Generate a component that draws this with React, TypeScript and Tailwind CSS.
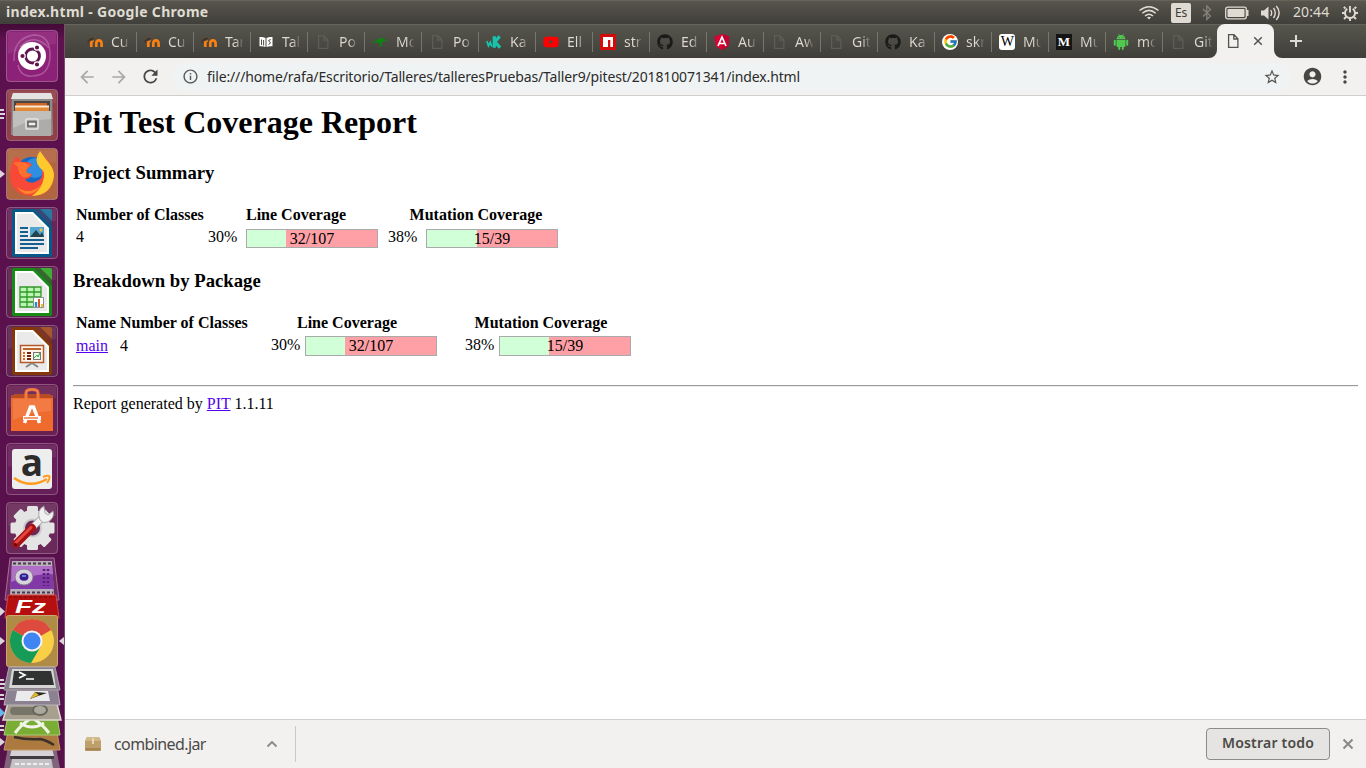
import type { ReactNode } from "react";
import { FaGithub, FaYoutube } from "react-icons/fa";
import { FcGoogle } from "react-icons/fc";
import {
  MdAccountCircle,
  MdArrowBack,
  MdArrowForward,
  MdInfoOutline,
  MdMoreVert,
  MdRefresh,
  MdStarBorder,
} from "react-icons/md";

/* ---------- Favicons ---------- */

function Moodle() {
  return (
    <svg width="16" height="16" viewBox="0 0 16 16">
      <path d="M4.300 13V9Q4.300 6.300 6.800 6.300M9.300 13V9.500Q9.300 6.300 11.900 6.300T14.600 9.500V13" fill="none" stroke="#f98012" strokeWidth="2.700" />
      <path d="M0 6.500L4 3.200L8.500 3.500L6.500 6L2 7.500V11" fill="#383632" stroke="#7b5230" strokeWidth=".6" />
    </svg>
  );
}

function Page({ color = "#5d5c55" }: { color?: string }) {
  return (
    <svg width="16" height="16" viewBox="0 0 16 16" fill="none" stroke={color} strokeWidth="1.300">
      <path d="M3.600 1.700H9L12.900 5.700V14.300H3.600ZM8.800 1.900V6H12.700" />
    </svg>
  );
}

function Book() {
  return (
    <svg width="16" height="16" viewBox="0 0 16 16">
      <path d="M1.500 3Q5 2.500 7.500 4V13Q5 11.800 1.500 12.300ZM14.500 3Q11 2.500 8.500 4V13Q11 11.800 14.500 12.300Z" fill="#fff" />
      <path d="M3.500 5.500V11M5.600 6V11.500M12.800 5.500L10.500 6.500L12.600 9L10.500 10.500" stroke="#4b4a44" fill="none" />
    </svg>
  );
}

function Kangaroo() {
  return (
    <svg width="16" height="16" viewBox="0 0 16 16">
      <path d="M0 8.500L4 6.500L7 4.500L9.500 3.500L11 5L14 5.500L15 6.500L11.500 7.500L9 9L10.500 11L8 13L7 12.500L8.500 11L6.500 9L4.500 8L1 9Z" fill="#0b850f" />
    </svg>
  );
}

function Kahoot() {
  return (
    <svg width="17" height="16" viewBox="0 0 17 16" fill="none" stroke="#16c4ae">
      <path d="M.8 7L2.600 12L4.500 8.500L6.300 13" strokeWidth="1.900" />
      <path d="M8.800 2V14M14.500 1.800L9.500 8L15 14" strokeWidth="3.400" />
    </svg>
  );
}

function Npm() {
  return (
    <svg width="16" height="16" viewBox="0 0 16 16">
      <path d="M0 0H16V16H0Z" fill="#d50a0a" />
      <path d="M3 3H13V13H10.300V6H8V13H3Z" fill="#fff" />
    </svg>
  );
}

function Angular() {
  return (
    <svg width="16" height="16" viewBox="0 0 16 16">
      <path d="M8 0L15.300 2.600L14.200 12.200L8 16L1.800 12.200L.7 2.600Z" fill="#dd0031" />
      <path d="M8 0L15.300 2.600L14.200 12.200L8 16Z" fill="#c3002f" />
      <path d="M4 12L8 3L12 12M5.500 9.500H10.500" fill="none" stroke="#fff" strokeWidth="1.700" />
    </svg>
  );
}

function Android() {
  return (
    <svg width="16" height="16" viewBox="0 0 16 16" fill="#50c850">
      <path d="M3.500 5.300Q3.800 2.300 6 1.500L5.200 .3L5.800 0L6.700 1.200Q8 .9 9.300 1.200L10.200 0L10.800 .3L10 1.500Q12.200 2.300 12.500 5.300Z" />
      <path d="M3.500 6H12.500V12Q12.500 13 11.500 13H10.700V15Q10.700 16 9.700 16T8.800 15V13H7.200V15Q7.200 16 6.300 16T5.300 15V13H4.500Q3.500 13 3.500 12Z" />
      <rect x=".8" y="5.800" width="2" height="6" rx="1" />
      <rect x="13.200" y="5.800" width="2" height="6" rx="1" />
      <path d="M5.500 3.200H6.400V4H5.500ZM9.600 3.200H10.500V4H9.600Z" fill="#4b4a44" />
    </svg>
  );
}

function Letter({ children, dark = false }: { children: string; dark?: boolean }) {
  return (
    <span
      className={
        dark
          ? "flex size-4 items-center justify-center bg-[#151515] font-['Liberation_Serif',serif] text-[13px] leading-4 font-bold text-white"
          : "flex size-4 items-center justify-center rounded-[3px] bg-white font-['Liberation_Serif',serif] text-[14px] leading-4 tracking-tighter text-black"
      }
    >
      {children}
    </span>
  );
}

const tabs: { icon: ReactNode; title: string }[] = [
  { icon: <Moodle />, title: "Cu" },
  { icon: <Moodle />, title: "Cu" },
  { icon: <Moodle />, title: "Tar" },
  { icon: <Book />, title: "Tal" },
  { icon: <Page />, title: "Po" },
  { icon: <Kangaroo />, title: "Mo" },
  { icon: <Page />, title: "Po" },
  { icon: <Kahoot />, title: "Ka" },
  { icon: <FaYoutube size={16} color="#f00" />, title: "Ell" },
  { icon: <Npm />, title: "str" },
  { icon: <FaGithub size={16} color="#1b1b1a" />, title: "Ed" },
  { icon: <Angular />, title: "Au" },
  { icon: <Page />, title: "Aw" },
  { icon: <Page />, title: "Git" },
  { icon: <FaGithub size={16} color="#1b1b1a" />, title: "Ka" },
  {
    icon: (
      <span className="flex size-4 items-center justify-center rounded-full bg-white">
        <FcGoogle size={15} />
      </span>
    ),
    title: "skr",
  },
  { icon: <Letter>W</Letter>, title: "Mu" },
  { icon: <Letter dark>M</Letter>, title: "Mu" },
  { icon: <Android />, title: "mo" },
  { icon: <Page />, title: "Git" },
];

/* ---------- Desktop panel ---------- */

function TopPanel() {
  return (
    <header className="flex h-6 shrink-0 items-center justify-between border-t border-[#66645a] bg-gradient-to-b from-[#57554c] to-[#403f3a] pl-1.5 text-[#dfdbd2]">
      <span className="-mt-0.5 text-[14px] leading-6 font-bold tracking-[0.31px]">index.html - Google Chrome</span>
      <div className="flex h-full items-center">
        <svg width="22" height="16" viewBox="0 0 22 16" fill="none" stroke="#dfdbd2" strokeWidth="1.500">
          <path d="M1.500 5.500Q11-2 20.500 5.500M4.300 8.300Q11 2.500 17.700 8.300M7 11Q11 7.500 15 11" />
          <path d="M9 12.500Q11 11 13 12.500L11 14.500Z" fill="#dfdbd2" stroke="none" />
        </svg>
        <span className="ml-[11px] flex h-5 w-5 items-center justify-center rounded-[2px] bg-[#dfdbd2] text-[12px] leading-5 tracking-tight text-[#3c3b37]">Es</span>
        <svg className="ml-[11px]" width="10" height="18" viewBox="0 0 10 18" fill="none" stroke="#85837a" strokeWidth="1.300">
          <path d="M1 5L8.500 12L4.800 15.500V2L8.500 5.500L1 12.500" />
        </svg>
        <svg className="ml-[13px]" width="24" height="14" viewBox="0 0 24 14">
          <rect x=".7" y="1.200" width="20.600" height="11.600" rx="2" fill="none" stroke="#dfdbd2" strokeWidth="1.300" />
          <rect x="2.500" y="3" width="17" height="8" rx=".8" fill="#dfdbd2" />
          <path d="M21.500 4H23.500V10H21.500" fill="#dfdbd2" />
        </svg>
        <svg className="ml-3" width="20" height="16" viewBox="0 0 20 16" fill="none" stroke="#dfdbd2" strokeWidth="1.400">
          <path d="M0 5.500H3L7.500 1.500V14.500L3 10.500H0Z" fill="#dfdbd2" stroke="none" />
          <path d="M9.700 5Q11.600 8 9.700 11M12.500 3Q16 8 12.500 13M15.300 1Q21 8 15.300 15" />
        </svg>
        <span className="-mt-0.5 ml-3 w-9 text-[14px] leading-6 tracking-[0.1px] whitespace-nowrap">20:44</span>
        <svg className="mr-2 ml-[13px]" width="16" height="16" viewBox="0 0 16 16" fill="none" stroke="#dfdbd2">
          <path d="M5.300 3.800A5 5 0 1 0 10.700 3.800" strokeWidth="1.900" />
          <path d="M8 1V7.500M3.500 3.500L1.800 1.800M12.500 3.500L14.200 1.800M3 8H0M13 8H16M4 12L2 14M12 12L14 14M8 13V16" strokeWidth="1.900" />
        </svg>
      </div>
    </header>
  );
}

/* ---------- Launcher ---------- */

function Tile({ fill, pip, children }: { fill: string; pip?: "lines" | "arrow"; children: ReactNode }) {
  return (
    <svg className="block shrink-0" width="64" height="59" viewBox="0 0 64 59">
      <rect x="6.500" y="6.500" width="51" height="51" rx="3.500" fill={fill} stroke="#fff" strokeOpacity=".28" />
      <path d="M8 8H56V20Q32 22 8 30Z" fill="#fff" opacity=".07" />
      {pip === "lines" && <path d="M0 27H4M0 31H5M0 35H4" stroke="#ddd5dc" strokeWidth="2" />}
      {pip === "arrow" && <path d="M0 28L5 32L0 36Z" fill="#ddd5dc" />}
      <g transform="translate(6 6)">{children}</g>
    </svg>
  );
}

function Sheet({ color, light, children }: { color: string; light: string; children: ReactNode }) {
  return (
    <>
      <path d="M6 4Q6 2 8 2H28L46 20V48Q46 50 44 50H8Q6 50 6 48Z" fill={color} />
      <path d="M34 2H44Q46 2 46 4V14Z" fill={light} />
      <path d="M28 2L34 2L46 14V20Z" fill={color} opacity=".6" />
      <path d="M9 5H27L43 21V47H9Z" fill="#fff" />
      <path d="M11 7H26L41 22V45H11Z" fill="#eaeaea" />
      {children}
    </>
  );
}

function ToothedGear() {
  return (
    <g fill="#e4e4e4">
      {[0, 45, 90, 135].map((angle) => (
        <rect key={angle} x="21" y="4" width="11" height="44" rx="1.500" transform={`rotate(${angle} 26.500 26)`} />
      ))}
      <circle cx="26.500" cy="26" r="18" />
      <circle cx="26.500" cy="26" r="8.500" fill="#6a2959" stroke="#c9c9c9" strokeWidth="2" />
    </g>
  );
}

function FoldedStack() {
  return (
    <svg className="block shrink-0" width="65" height="213" viewBox="0 555 65 213">
      {/* screen recorder */}
      <path d="M10 558H54L59 600H5Z" fill="#6d2a63" stroke="#a56f9c" />
      <path d="M12 561H52L54 596H10Z" fill="#b9b1ba" />
      <path d="M12 566H52L54 589H10Z" fill="#8238a6" />
      <path d="M12 566H52L53 574Q30 574 11 582Z" fill="#b16fca" />
      <path d="M13 563.500H52M12 592.500H53" stroke="#4b3550" strokeWidth="2" strokeDasharray="3 2" />
      <path d="M44 569V586M48 569V586" stroke="#542070" strokeWidth="2.500" strokeDasharray="2 2" />
      <ellipse cx="24" cy="577" rx="9" ry="8" fill="#d9d4dc" stroke="#89838d" />
      <ellipse cx="24" cy="577" rx="4.500" ry="3.700" fill="#3b1b90" />
      <path d="M22 576H26" stroke="#6fa4f0" strokeWidth="1.500" />
      {/* file transfer */}
      <path d="M8 595H56L59 618H5Z" fill="#b5100f" stroke="#d04b42" />
      <path d="M9 597H55M7 616H57" stroke="#730808" strokeDasharray="3 2" />
      <text x="15" y="613" fontFamily="Liberation Sans, sans-serif" fontSize="19" fontWeight="bold" fontStyle="italic" fill="#fff" textLength="31" lengthAdjust="spacingAndGlyphs">Fz</text>
      <path d="M0 607L5 611.500L0 616Z" fill="#ddd5dc" />
      {/* web browser */}
      <rect x="6.500" y="615.500" width="51" height="51" rx="2" fill="#b08b45" stroke="#c8ab72" />
      <circle cx="32" cy="641" r="22" fill="#f9cf48" />
      <path d="M32 641L12.900 630A22 22 0 0 1 51.100 630Z" fill="#dd4b3e" />
      <path d="M32 641L12.900 630A22 22 0 0 0 31 663L41 646Z" fill="#179c58" />
      <circle cx="32" cy="641" r="10.500" fill="#f4f4f4" />
      <circle cx="32" cy="641" r="8.500" fill="#4185f3" />
      <path d="M0 637L5 641L0 645Z" fill="#ddd5dc" />
      <path d="M64 637L59 641L64 645Z" fill="#ddd5dc" />
      {/* design tools */}
      <path d="M9 742H55L60 768H4Z" fill="#80647b" />
      <path d="M14 751H50L53 768H10Z" fill="#c5c2c5" />
      <path d="M12 748H52L54 756H10Z" fill="#d4d2d4" />
      <path d="M10 756H54V759H10Z" fill="#3f3b40" />
      <path d="M15 764H50" stroke="#eee" strokeWidth="2" strokeDasharray="4 2" />
      <path d="M8 732H57L60 750H4Z" fill="#ac7a3e" stroke="#c79a68" />
      <path d="M14 737Q27 740 40 739Q46 740 54 745" fill="none" stroke="#39312a" strokeWidth="2.500" />
      <path d="M8 716H57L60 735H4Z" fill="#79ad34" stroke="#a8cd72" />
      <path d="M15 733Q21 725 30 719M49 733Q43 725 34 719M20 723Q32 731 44 723" fill="none" stroke="#f0f5e8" strokeWidth="3" />
      <path d="M9 700H56L61 720H3Z" fill="#a7a08f" stroke="#dedad4" strokeWidth="1.500" />
      <rect x="10" y="707" width="33" height="8" rx="4" fill="#777568" />
      <ellipse cx="40" cy="710" rx="7" ry="5" fill="#aaa99b" stroke="#66665c" strokeWidth="2" />
      <path d="M8 685H57L60 705H4Z" fill="#8c8190" stroke="#b9b2bb" />
      <path d="M17 691H48L50 701H15Z" fill="#ebeaec" />
      <path d="M47 693L38 696L30 699L35 692Z" fill="#27241e" />
      <path d="M30 699L35 692L39 695Z" fill="#dfb52c" />
      <path d="M9 667H55L60 690H4Z" fill="#88808a" stroke="#aaa3ab" />
      <path d="M12 669H53L56 688H9Z" fill="#d6d4d5" />
      <path d="M14 671H51L54 685H12Z" fill="#303331" />
      <path d="M19 672L25 675L19 678M26 679H34" fill="none" stroke="#fff" strokeWidth="1.700" />
      <path d="M0 680H4M0 684H5M0 688H4M0 695H4M0 699H4M0 726H4M0 730H4" stroke="#ddd5dc" strokeWidth="2" />
      <path d="M0 708L5 713L0 717Z" fill="#66b9ec" />
      <path d="M0 738L5 742L0 746Z" fill="#ddd5dc" />
    </svg>
  );
}

function Launcher() {
  return (
    <aside className="flex w-[65px] shrink-0 flex-col overflow-hidden border-r border-[#7c4c70] bg-gradient-to-b from-[#430a38] via-[#5d114f] via-2% to-[#56104a]">
      <Tile fill="#8d2177">
        <path d="M8 31Q7 8 28 5Q45 5 44 27M14 17Q28 2 43 18M12 35Q15 51 36 44M44 27Q43 46 26 46" fill="none" stroke="#d9a3cd" strokeWidth="1.500" opacity=".4" />
        <circle cx="26" cy="26" r="14" fill="#fff" />
        <circle cx="26.500" cy="26" r="7" fill="none" stroke="#61144f" strokeWidth="2.800" />
        <g fill="#61144f" stroke="#fff" strokeWidth="1.200">
          <circle cx="16.500" cy="26" r="2.700" />
          <circle cx="31" cy="17.500" r="2.700" />
          <circle cx="31" cy="34.500" r="2.700" />
        </g>
      </Tile>
      <Tile fill="#914048" pip="lines">
        <path d="M6 5H46L47 46H5Z" fill="#8d8c8a" />
        <path d="M7 4H45L47 10H5Z" fill="#e3e3e1" />
        <path d="M8 12H44V24H8Z" fill="#484543" />
        <path d="M10 14H41V22H10Z" fill="#cf6427" />
        <path d="M9 16.500H43V23H9Z" fill="#fbe8d0" />
        <path d="M9 18.500H43V22H9Z" fill="#e38935" />
        <path d="M7 22H45V47H7Z" fill="#adacaa" />
        <path d="M7 22H45V30Q22 31 7 39Z" fill="#c0bfbd" />
        <rect x="20" y="30" width="12" height="10" rx="1" fill="#a2a19f" stroke="#e6e6e4" strokeWidth="1.500" />
        <rect x="22" y="33" width="8" height="4" fill="#eee" stroke="#393838" />
      </Tile>
      <Tile fill="#b16540" pip="arrow">
        <circle cx="26" cy="26" r="17" fill="#1468c7" />
        <circle cx="29" cy="20" r="10" fill="#2f8ee0" />
        <path d="M8 12L10 8L16 14Q23 13 26 17L21 21L20 25L26 26Q25 31 19 31Q22 36 29 34Q38 31 36 22Q29 16 33 3Q37 9 42 12L44 16Q48 21 48 28Q46 48 26 48Q5 47 4 28Q4 18 8 12Z" fill="#f84838" />
        <path d="M34 3Q38 9 43 15Q48 21 48 28Q46 47 26 48Q36 41 38 29Q39 23 34 20Q27 12 34 3Z" fill="#fdc92c" />
        <path d="M7 15Q15 12 24 17L20 22L21 25L25 26Q23 30 17 29Q12 26 12 19Z" fill="#ff7030" />
        <path d="M11 39Q23 48 35 37Q30 47 20 46Q14 44 11 39Z" fill="#ff9a25" opacity=".75" />
      </Tile>
      <Tile fill="#682558">
        <Sheet color="#075a88" light="#2878a1">
          <path d="M14 21H22M14 25H22M14 29H22M14 33H38M14 37H38M14 41H32" stroke="#156091" strokeWidth="2" />
          <path d="M24 20H38V30H24Z" fill="#54a6d2" />
          <path d="M24 30L30 23L34 28L36 25L38 30Z" fill="#25434d" />
          <circle cx="35" cy="23" r="1.500" fill="#f3c13d" />
        </Sheet>
      </Tile>
      <Tile fill="#5d224e">
        <Sheet color="#168c14" light="#3fae34">
          <path d="M14 21H35V41H14Z" fill="#baf5b1" />
          <path d="M14 21H35V41H14ZM14 26H35M14 31H35M14 36H35M21 21V41M28 21V41" fill="none" stroke="#309828" strokeWidth="1.300" />
          <path d="M27.500 31.500H37.500V41.500H27.500Z" fill="#fff" stroke="#88918e" />
          <path d="M30 36V41" stroke="#268cd0" strokeWidth="2.500" />
          <path d="M33 33V41" stroke="#d35829" strokeWidth="2" />
          <path d="M36 38V41" stroke="#f4bd24" strokeWidth="2" />
        </Sheet>
      </Tile>
      <Tile fill="#60254f">
        <Sheet color="#843807" light="#a7572d">
          <path d="M14.500 20.500H37.500V37.500H14.500Z" fill="#fff4ea" stroke="#b25a29" strokeWidth="1.500" />
          <path d="M17 24H35" stroke="#bf632d" strokeWidth="2" />
          <path d="M17 28H19M17 31H19M17 34H19" stroke="#d06830" strokeWidth="2" />
          <path d="M21 28H25M21 31H25M21 34H25" stroke="#76290a" strokeWidth="2" />
          <rect x="27.500" y="27.500" width="7" height="7" fill="#e9faed" stroke="#777" />
          <path d="M28 33L31 30L32 32L34 28" fill="none" stroke="#36a33e" />
          <path d="M26 38L20 42M26 38L32 42" stroke="#858585" strokeWidth="2" />
        </Sheet>
      </Tile>
      <Tile fill="#692052">
        <path d="M5 12L10 10H42L47 12V47H5Z" fill="#ee6a2d" />
        <path d="M5 12L10 10H42L47 12V14H5Z" fill="#b74b24" />
        <path d="M7 15H45V27Q25 28 7 36Z" fill="#f48854" opacity=".55" />
        <path d="M20 17V9Q20 5.500 26 5.500T32 9V17" fill="none" stroke="#f17b43" strokeWidth="3" />
        <path d="M18.500 39L24.500 23H27.500L33.500 39" fill="none" stroke="#fff" strokeWidth="3.500" />
        <path d="M17 34H35" stroke="#fff" strokeWidth="4" />
        <path d="M18 34H32" stroke="#ec6328" strokeWidth="1.300" />
      </Tile>
      <Tile fill="#671f59">
        <rect x="6" y="6" width="40" height="40" rx="3" fill="#eee" />
        <text x="26" y="33" textAnchor="middle" fontFamily="Open Sans, sans-serif" fontWeight="bold" fontSize="37" fill="#2c2c2c">a</text>
        <path d="M8 35Q24 46 41 36" fill="none" stroke="#ff9c1b" strokeWidth="2.500" />
        <path d="M37 34Q42 32 43.500 33.500Q44 36 41 40" fill="none" stroke="#ff9c1b" strokeWidth="2" />
      </Tile>
      <Tile fill="#6a2959">
        <ToothedGear />
        <path d="M26 26L38 14" stroke="#999" strokeWidth="7" />
        <path d="M26 26L38 14" stroke="#f0f0f0" strokeWidth="5.500" />
        <path d="M34 18Q30 8 38 4L39 11L42 13L47 9Q49 16 42 20Q37 22 34 18Z" fill="#f0f0f0" stroke="#999" strokeWidth=".8" />
        <path d="M10 42L26 26" stroke="#a91213" strokeWidth="8" strokeLinecap="round" />
        <path d="M10 40.500L25 25.500" stroke="#e34743" strokeWidth="3" strokeLinecap="round" />
        <circle cx="9.500" cy="42.500" r="1.500" fill="#5b0a0a" />
      </Tile>
      <FoldedStack />
    </aside>
  );
}

/* ---------- Browser chrome ---------- */

function TabStrip() {
  return (
    <div className="flex h-[34px] shrink-0 items-stretch border-t border-[#66645a] bg-gradient-to-b from-[#57564d] to-[#3f3e39] pl-[15px]">
      {tabs.map((tab, index) => (
        <div key={index} className={index === 19 ? "flex w-[54px] items-center" : "flex w-[57px] items-center"}>
          <span className="ml-[7px] flex w-4 shrink-0 justify-center">{tab.icon}</span>
          <span className="ml-2 w-[18px] overflow-hidden bg-gradient-to-r from-[#dfdbd2] from-55% to-[#dfdbd2]/10 bg-clip-text text-[14px] leading-[22px] whitespace-nowrap text-transparent">
            {tab.title}
          </span>
          {index < 19 && <span className="ml-[7px] h-5 w-px shrink-0 bg-[#77766d]" />}
        </div>
      ))}
      <div className="relative -mt-px flex w-[57px] items-center rounded-t-lg bg-[#f2f1f0] pl-2">
        <svg className="absolute bottom-0 -left-2" width="8" height="8" viewBox="0 0 8 8">
          <path d="M8 0V8H0A8 8 0 0 0 8 0Z" fill="#f2f1f0" />
        </svg>
        <svg className="absolute -right-2 bottom-0" width="8" height="8" viewBox="0 0 8 8">
          <path d="M0 0V8H8A8 8 0 0 1 0 0Z" fill="#f2f1f0" />
        </svg>
        <Page color="#55534e" />
        <svg className="ml-3" width="10" height="10" viewBox="0 0 10 10" stroke="#55534e" strokeWidth="1.500">
          <path d="M1.200 1.200L8.800 8.800M8.800 1.200L1.200 8.800" />
        </svg>
      </div>
      <svg className="mt-[10px] ml-4" width="12" height="12" viewBox="0 0 12 12" stroke="#dfdbd2" strokeWidth="2">
        <path d="M6 0V12M0 6H12" />
      </svg>
    </div>
  );
}

function Toolbar() {
  return (
    <div className="flex h-[38px] shrink-0 items-center border-b border-[#d0cfce] bg-[#f2f1f0] pl-3">
      <MdArrowBack size={20} color="#aaa8a6" />
      <MdArrowForward size={20} color="#aaa8a6" className="ml-3" />
      <MdRefresh size={21} color="#484744" className="ml-[11px]" />
      <div className="ml-3 flex h-7 w-[1118px] items-center rounded-full bg-[#eff3f4] pl-2">
        <span className="ml-px">
          <MdInfoOutline size={17} color="#5a5956" />
        </span>
        <span className="ml-2 text-[14px] leading-7 tracking-[-0.135px] whitespace-nowrap text-[#2c2b29]">
          file:///home/rafa/Escritorio/Talleres/talleresPruebas/Taller9/pitest/201810071341/index.html
        </span>
        <MdStarBorder size={18} color="#55534e" className="mr-2.5 ml-auto" />
      </div>
      <MdAccountCircle size={21} color="#484744" className="ml-[11px]" />
      <MdMoreVert size={20} color="#484744" className="ml-3" />
    </div>
  );
}

/* ---------- Report ---------- */

function CoverageBar({ percent, legend, className }: { percent: number; legend: string; className: string }) {
  return (
    <div className={`grid w-[132px] grid-rows-[100%] border border-[#aaa] bg-[#ffa0a6] ${className}`}>
      <div className="col-start-1 row-start-1 bg-[#d0ffd8]" style={{ width: `${percent}%` }} />
      <span className="col-start-1 row-start-1 text-center leading-[18px]">{legend}</span>
    </div>
  );
}

function Report() {
  return (
    <main className="min-h-0 flex-1 overflow-hidden bg-white px-2 pt-2 font-['Liberation_Serif','Times_New_Roman',serif] text-[16px] leading-[18px] text-black">
      <h1 className="h-[37px] text-[32px] leading-[37px] font-bold">Pit Test Coverage Report</h1>
      <h3 className="mt-[21px] text-[18.72px] leading-[22px] font-bold">Project Summary</h3>
      <div className="mt-[22px] grid grid-cols-[130px_180px_180px] pl-[3px] font-bold">
        <span>Number of Classes</span>
        <span className="text-center">Line Coverage</span>
        <span className="text-center">Mutation Coverage</span>
      </div>
      <div className="mt-[4px] grid h-5 grid-cols-[130px_180px_180px] pl-[3px]">
        <span>4</span>
        <div className="flex pl-0.5">
          <span className="w-[38px]">30%</span>
          <CoverageBar percent={30} legend="32/107" className="mt-px h-[19px]" />
        </div>
        <div className="flex pl-0.5">
          <span className="w-[38px]">38%</span>
          <CoverageBar percent={38.46} legend="15/39" className="mt-px h-[19px]" />
        </div>
      </div>
      <h3 className="mt-[22px] text-[18.72px] leading-[22px] font-bold">Breakdown by Package</h3>
      <div className="mt-[22px] grid grid-cols-[44px_130px_194px_194px] pl-[3px] font-bold">
        <span>Name</span>
        <span>Number of Classes</span>
        <span className="text-center">Line Coverage</span>
        <span className="text-center">Mutation Coverage</span>
      </div>
      <div className="mt-[4px] grid h-5 grid-cols-[44px_130px_194px_194px] pl-[3px]">
        <a className="pt-px text-[#5500ee] underline">main</a>
        <span className="pt-px">4</span>
        <div className="flex pl-[21px]">
          <span className="w-[34px]">30%</span>
          <CoverageBar percent={30} legend="32/107" className="h-5" />
        </div>
        <div className="flex pl-[21px]">
          <span className="w-[34px]">38%</span>
          <CoverageBar percent={38} legend="15/39" className="h-5" />
        </div>
      </div>
      <hr className="mt-[29px] h-0.5 border-t border-b border-t-[#9a9a9a] border-b-[#eee]" />
      <p className="mt-2">
        Report generated by <a className="text-[#5500ee] underline">PIT</a> 1.1.11
      </p>
    </main>
  );
}

function DownloadShelf() {
  return (
    <footer className="flex h-[49px] shrink-0 items-center border-t border-[#d0cfce] bg-[#f2f1f0]">
      <div className="flex h-9 w-[231px] items-center border-r border-[#cccac8] pl-5">
        <svg width="16" height="16" viewBox="0 0 16 16">
          <path d="M2 1H14L16 5V14Q16 15 15 15H1Q0 15 0 14V5Z" fill="#bd9f6b" />
          <path d="M2 1H14L15.500 5H.5Z" fill="#d1b889" />
          <path d="M.5 12H15.500V14.500H.5Z" fill="#a58550" />
          <path d="M7 2H9V8H7Z" fill="#e6d5b0" />
        </svg>
        <span className="ml-[13px] w-[152px] text-[16px] leading-6 tracking-[-0.6px] text-[#4c4a46]">combined.jar</span>
        <svg width="12" height="8" viewBox="0 0 12 8" fill="none" stroke="#8a8886" strokeWidth="1.800">
          <path d="M1.500 6.500L6 2L10.500 6.500" />
        </svg>
      </div>
      <button className="ml-auto h-8 w-[124px] rounded border border-[#8d8b89] bg-[#e5e4e2] pb-0.5 text-[14px] leading-5 font-semibold tracking-[0.2px] whitespace-nowrap text-[#4c4a46]">Mostrar todo</button>
      <svg className="mr-3 ml-3" width="12" height="12" viewBox="0 0 12 12" stroke="#8a8886" strokeWidth="2">
        <path d="M1.500 1.500L10.500 10.500M10.500 1.500L1.500 10.500" />
      </svg>
    </footer>
  );
}

export default function App() {
  return (
    <div className="flex h-[768px] w-[1366px] flex-col overflow-hidden font-['Noto_Sans',sans-serif]">
      <TopPanel />
      <div className="flex min-h-0 flex-1">
        <Launcher />
        <div className="flex min-w-0 flex-1 flex-col">
          <TabStrip />
          <Toolbar />
          <Report />
          <DownloadShelf />
        </div>
      </div>
    </div>
  );
}
